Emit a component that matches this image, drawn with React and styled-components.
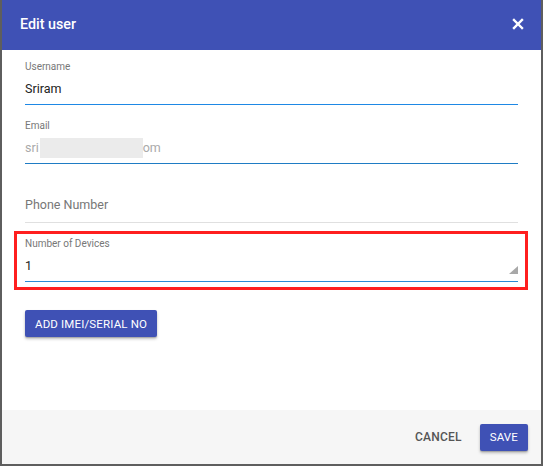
import React from 'react';
import styled, { createGlobalStyle } from 'styled-components';

const GlobalStyle = createGlobalStyle`
  html, body {
    margin: 0;
    padding: 0;
    background: #5e5e5e;
    font-family: Roboto, "Liberation Sans", Arial, sans-serif;
  }
  #root {
    height: 466px;
  }
`;

const Dialog = styled.div`
  display: flex;
  flex-direction: column;
  height: 464px;
  margin: 0 2px 0 2px;
  background: #fff;
`;

const Header = styled.div`
  display: flex;
  align-items: center;
  justify-content: space-between;
  height: 50px;
  padding: 0 17px 3px 18px;
  box-sizing: border-box;
  background: #3f51b5;
  color: #fff;
`;

const Title = styled.h2`
  margin: 0;
  font-size: 14.3px;
  font-weight: 500;
`;

const CloseButton = styled.button`
  display: flex;
  align-items: center;
  justify-content: center;
  padding: 0;
  border: 0;
  background: none;
  cursor: pointer;
`;

const Body = styled.div`
  flex: 1;
  display: flex;
  flex-direction: column;
  align-items: flex-start;
  padding: 10px 23px 0 23px;
`;

const Field = styled.div`
  width: 100%;
  box-sizing: border-box;
  height: 45px;
  margin-top: ${p => p.$first ? 0 : 14}px;
  border-bottom: 1px solid ${p => p.$line || '#e0e0e0'};
  position: relative;
`;

const Label = styled.div`
  height: 14px;
  line-height: 14px;
  font-size: 10px;
  color: #777;
`;

const Value = styled.div`
  display: flex;
  align-items: center;
  margin-top: 6px;
  height: 18px;
  line-height: 18px;
  font-size: 12.5px;
  color: ${p => p.$muted ? '#aaa' : '#222'};
`;

const Placeholder = styled.div`
  padding-top: 18px;
  line-height: 18px;
  font-size: 12.5px;
  color: #777;
`;

const Redacted = styled.span`
  display: inline-block;
  width: 103px;
  height: 20px;
  background: #ebebeb;
  margin-left: 1px;
`;

const Highlight = styled.div`
  align-self: stretch;
  margin: 8px -10px 0 -11px;
  padding: 3px 7px 5px 8px;
  border: 3px solid #ff1f1f;
`;

const Grip = styled.span`
  position: absolute;
  right: 0;
  bottom: 7px;
  width: 0;
  height: 0;
  border-left: 9px solid transparent;
  border-bottom: 8px solid #a8a8a8;
`;

const RaisedButton = styled.button`
  margin-top: ${p => p.$top || 0}px;
  height: 27px;
  padding: 0 ${p => p.$pad || 10}px;
  border: 0;
  border-radius: 2px;
  background: #3f51b5;
  color: #fff;
  font-family: inherit;
  font-size: 11.5px;
  font-weight: 400;
  letter-spacing: 0.15px;
  text-transform: uppercase;
  box-shadow: 0 2px 3px rgba(0, 0, 0, 0.25), 0 1px 1px rgba(0, 0, 0, 0.15);
  cursor: pointer;
`;

const Footer = styled.div`
  display: flex;
  align-items: center;
  justify-content: flex-end;
  gap: 11px;
  height: 54px;
  padding: 0 13px 0 0;
  background: #f6f6f6;
`;

const TextButton = styled.button`
  height: 27px;
  padding: 0 7px;
  border: 0;
  background: none;
  color: #555;
  font-family: inherit;
  font-size: 12px;
  font-weight: 500;
  letter-spacing: 0.2px;
  text-transform: uppercase;
  cursor: pointer;
`;

const CloseIcon = () => (
  <svg width="12" height="12" viewBox="0 0 12 12">
    <path d="M2 2 L10 10 M10 2 L2 10" stroke="#fff" strokeWidth="2.4" strokeLinecap="square" />
  </svg>
);

export default function App() {
  return (
    <>
      <GlobalStyle />
      <Dialog>
        <Header>
          <Title>Edit user</Title>
          <CloseButton aria-label="close"><CloseIcon /></CloseButton>
        </Header>
        <Body>
          <Field $first $line="#1e88e5">
            <Label>Username</Label>
            <Value>Sriram</Value>
          </Field>
          <Field $line="#1f7cc4">
            <Label>Email</Label>
            <Value $muted>sri<Redacted />om</Value>
          </Field>
          <Field>
            <Placeholder>Phone Number</Placeholder>
          </Field>
          <Highlight>
            <Field $first $line="#2a8ad4">
              <Label>Number of Devices</Label>
              <Value>1</Value>
              <Grip />
            </Field>
          </Highlight>
          <RaisedButton $top={20}>Add IMEI/Serial No</RaisedButton>
        </Body>
        <Footer>
          <TextButton>Cancel</TextButton>
          <RaisedButton>Save</RaisedButton>
        </Footer>
      </Dialog>
    </>
  );
}
